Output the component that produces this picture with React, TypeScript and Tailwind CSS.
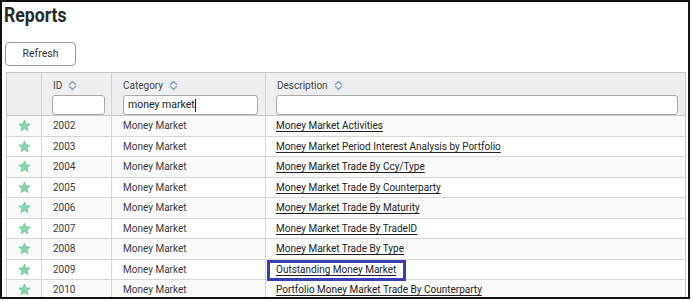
import React from "react";

const rows: [string, string][] = [
  ["2002", "Money Market Activities"],
  ["2003", "Money Market Period Interest Analysis by Portfolio"],
  ["2004", "Money Market Trade By Ccy/Type"],
  ["2005", "Money Market Trade By Counterparty"],
  ["2006", "Money Market Trade By Maturity"],
  ["2007", "Money Market Trade By TradeID"],
  ["2008", "Money Market Trade By Type"],
  ["2009", "Outstanding Money Market"],
  ["2010", "Portfolio Money Market Trade By Counterparty"],
];

function SortIcon() {
  return (
    <svg width="9" height="11" viewBox="0 0 9 11" className="ml-[6px] inline-block">
      <path d="M1.5 4.5 L4.5 1.5 L7.5 4.5" fill="none" stroke="#8fa9c4" strokeWidth="1.6" strokeLinecap="round" strokeLinejoin="round" />
      <path d="M1.5 6.5 L4.5 9.5 L7.5 6.5" fill="none" stroke="#8fa9c4" strokeWidth="1.6" strokeLinecap="round" strokeLinejoin="round" />
    </svg>
  );
}

function Star() {
  return (
    <svg width="13" height="13" viewBox="0 0 24 24">
      <path
        d="M12 1.8l3.1 6.9 7.4.7-5.6 5 1.7 7.3L12 17.9l-6.6 3.8 1.7-7.3-5.6-5 7.4-.7z"
        fill="#84d8ac"
        stroke="#5cb886"
        strokeWidth="1"
      />
    </svg>
  );
}

export default function App() {
  return (
    <div
      className="w-[690px] h-[299px] border-2 border-[#111] overflow-hidden bg-white text-[#3a3a3a]"
      style={{ fontFamily: "Roboto, 'Noto Sans', sans-serif" }}
    >
      <div className="pl-[2px] h-[26px] text-[21px] leading-[26px] font-bold text-[#2a2a2a]">
        <span className="inline-block origin-left scale-x-[0.84]">Reports</span>
      </div>
      <div className="mt-[14px] ml-[3px]">
        <button className="w-[71px] h-[24px] border border-[#9a9a9a] rounded-[4px] bg-white text-[10.5px] text-[#333] flex items-center justify-center">
          Refresh
        </button>
      </div>
      <div className="mt-[6px] ml-[4px] w-[680px] border border-[#c9c9c9]">
        <div className="grid grid-cols-[35px_70px_154px_1fr] h-[43px] bg-[#efefef] border-b border-[#c9c9c9]">
          <div className="border-r border-[#d2d2d2]" />
          <div className="border-r border-[#d2d2d2] pl-[10px] pr-[6px] pt-[6px]">
            <div className="flex items-center h-[12px] pl-[1px] text-[10px] text-[#444]">
              ID<SortIcon />
            </div>
            <div className="mt-[4px] h-[20px] border border-[#a9a9a9] rounded-[3px] bg-white" />
          </div>
          <div className="border-r border-[#d2d2d2] pl-[11px] pr-[7px] pt-[6px]">
            <div className="flex items-center h-[12px] text-[10px] text-[#444]">
              Category<SortIcon />
            </div>
            <div className="mt-[4px] h-[20px] border border-[#a9a9a9] rounded-[3px] bg-white flex items-center pl-[4px] text-[10.5px] text-[#222]">
              money market<span className="w-px h-[13px] bg-[#222] ml-[0.5px]" />
            </div>
          </div>
          <div className="pl-[10px] pr-[7px] pt-[6px]">
            <div className="flex items-center h-[12px] pl-[1px] text-[10px] text-[#444]">
              Description<SortIcon />
            </div>
            <div className="mt-[4px] h-[20px] border border-[#a9a9a9] rounded-[3px] bg-white" />
          </div>
        </div>
        {rows.map(([id, desc], i) => (
          <div
            key={id}
            className={`grid grid-cols-[35px_70px_154px_1fr] h-[20.5px] border-b border-[#d6d6d6] text-[10px] ${
              i % 2 === 0 ? "bg-[#fafafa]" : "bg-white"
            }`}
          >
            <div className="border-r border-[#d6d6d6] flex items-center justify-center">
              <Star />
            </div>
            <div className="border-r border-[#d6d6d6] flex items-center pl-[11px]">{id}</div>
            <div className="border-r border-[#d6d6d6] flex items-center pl-[11px]">Money Market</div>
            <div className="relative flex items-center pl-[10px]">
              <span className="underline text-[#222] underline-offset-[1.5px]">{desc}</span>
              {id === "2009" && (
                <span className="absolute left-[1px] top-[0.5px] w-[139px] h-[21px] border-[3px] border-[#3b3fb4]" />
              )}
            </div>
          </div>
        ))}
      </div>
    </div>
  );
}
